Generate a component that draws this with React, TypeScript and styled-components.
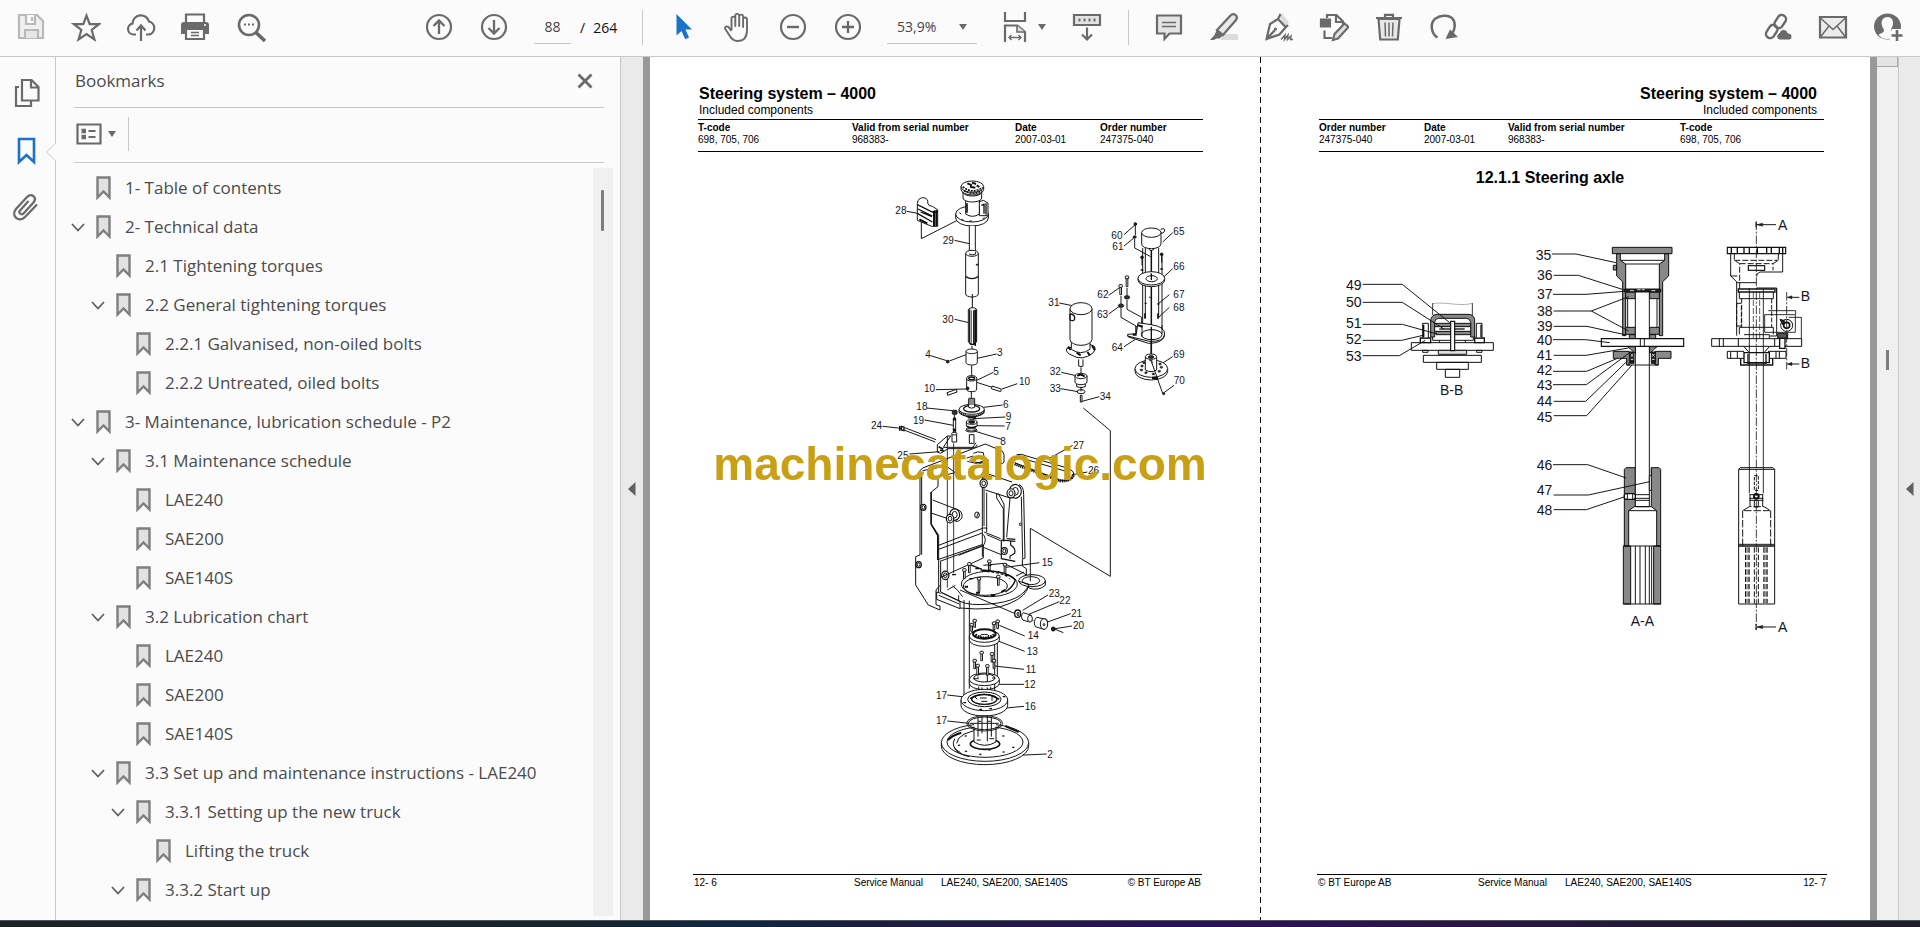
import React from "react";
import styled, { createGlobalStyle } from "styled-components";

const ui = `"Segoe UI", "Open Sans", "Noto Sans", sans-serif`;
const doc = `"Liberation Sans", Arial, sans-serif`;
const ink = "#6a6a6a";
const line = "#c8c8c8";

const GlobalStyle = createGlobalStyle`
  * { box-sizing: border-box; }
  body { margin: 0; background: #fbfbfb; font-family: ${ui}; }
  button, input, select { font: inherit; color: inherit; background: none; border: 0; padding: 0; margin: 0; outline: 0; }
  svg { display: block; }
`;

/* ---------- application frame ---------- */

const Shell = styled.div`
  display: flex;
  flex-direction: column;
  height: 100vh;
  overflow: hidden;
`;

const Toolbar = styled.header`
  display: flex;
  align-items: center;
  height: 57px;
  flex: none;
  padding: 0 5px 2px 3px;
  border-bottom: 1px solid ${line};
  color: #444;
  font-size: 14px;
`;

const Group = styled.div<{ $start?: string }>`
  display: flex;
  align-items: center;
  margin-left: ${(p) => p.$start ?? "0"};
`;

const ToolButton = styled.button<{ $width?: number }>`
  display: flex;
  align-items: center;
  justify-content: center;
  gap: 8px;
  width: ${(p) => p.$width ?? 55}px;
  height: 44px;
`;

const Separator = styled.span<{ $left: number; $right: number }>`
  width: 1px;
  height: 35px;
  background: ${line};
  margin: 0 ${(p) => p.$right}px 0 ${(p) => p.$left}px;
`;

const PageInput = styled.input`
  width: 37px;
  height: 34px;
  margin-left: 13px;
  text-align: center;
  border-bottom: 1px solid ${line};
`;

const PageTotal = styled.span`
  display: flex;
  gap: 8px;
  width: 46px;
  margin-left: 9px;
  color: #111;
`;

const ZoomBox = styled.label`
  display: flex;
  align-items: center;
  position: relative;
  width: 90px;
  height: 34px;
  margin: 0 22px 0 12px;
  border-bottom: 1px solid ${line};
`;

const ZoomSelect = styled.select`
  appearance: none;
  width: 100%;
  height: 100%;
  padding-left: 10px;
`;

const ZoomCaret = styled.span`
  position: absolute;
  right: 10px;
  top: 14px;
  pointer-events: none;
`;

const Main = styled.main`
  display: flex;
  flex: 1;
  min-height: 0;
`;

const Taskbar = styled.div`
  flex: none;
  height: 7px;
  border-top: 1px solid #4a5560;
  background: linear-gradient(90deg, #1b2324 0%, #17242b 30%, #0f2740 38%, #1c1d3c 46%, #2a1257 60%, #2c1255 68%, #2a1640 78%, #221b30 90%, #1d1b26 100%);
`;

/* ---------- navigation ---------- */

const Rail = styled.nav`
  position: relative;
  display: flex;
  flex-direction: column;
  align-items: center;
  gap: 26px;
  width: 56px;
  flex: none;
  padding: 20px 4px 0 0;
  border-right: 1px solid ${line};
`;

const RailButton = styled.button`
  width: 32px;
  height: 32px;
`;

const Notch = styled.span`
  position: absolute;
  right: -1px;
  top: 85px;
`;

const Panel = styled.aside`
  display: flex;
  flex-direction: column;
  width: 565px;
  flex: none;
  border-right: 1px solid ${line};
  color: #4b4b4b;
  font-size: 17px;
`;

const PanelHead = styled.div`
  display: flex;
  align-items: center;
  justify-content: space-between;
  height: 51px;
  flex: none;
  margin: 0 16px 0 18px;
  padding: 0 11px 3px 1px;
  border-bottom: 1px solid ${line};
`;

const PanelTitle = styled.h2`
  margin: 0;
  font-size: 17px;
  font-weight: 400;
`;

const PanelTools = styled.div`
  display: flex;
  align-items: center;
  height: 55px;
  flex: none;
  margin: 0 16px 0 18px;
  padding-bottom: 2px;
  border-bottom: 1px solid ${line};
`;

const OptionsButton = styled.button`
  display: flex;
  align-items: center;
  gap: 6px;
  height: 34px;
  width: 55px;
  padding-left: 2px;
  border-right: 1px solid ${line};
`;

const PanelBody = styled.div`
  display: flex;
  flex: 1;
  min-height: 0;
  padding: 5px 7px 4px 0;
`;

const Tree = styled.ul`
  flex: 1;
  margin: 0;
  padding: 0;
  list-style: none;
  overflow: hidden;
`;

const TreeRow = styled.li<{ $level: number }>`
  display: flex;
  align-items: center;
  height: 39px;
  padding-left: ${(p) => 15 + p.$level * 20}px;
  white-space: nowrap;
`;

const Toggle = styled.button`
  width: 14px;
  height: 20px;
  margin-right: 11px;
`;

const ToggleGap = styled.span`
  width: 25px;
`;

const TreeLink = styled.a`
  display: flex;
  align-items: center;
  gap: 14px;
  color: inherit;
  text-decoration: none;
`;

const PanelScroll = styled.div`
  width: 20px;
  padding: 22px 9px 0 8px;
  background: #f0f0f0;
`;

const PanelThumb = styled.div`
  height: 41px;
  border-radius: 1px;
  background: #7d7d7d;
`;

/* ---------- document ---------- */

const CollapseStrip = styled.button<{ $width: number }>`
  display: flex;
  align-items: center;
  justify-content: center;
  width: ${(p) => p.$width}px;
  flex: none;
  background: #eaeaea;
`;

const Gutter = styled.div`
  width: 7px;
  flex: none;
  background: #999;
`;

const Spread = styled.div`
  display: grid;
  grid-template-columns: 1fr 1fr;
  flex: 1;
  min-width: 0;
  background: #fff;
  color: #000;
  font-family: ${doc};
`;

const Sheet = styled.article<{ $right?: boolean }>`
  display: flex;
  flex-direction: column;
  min-width: 0;
  min-height: 0;
  ${(p) =>
    p.$right &&
    `background: repeating-linear-gradient(180deg, #000 0 6px, transparent 6px 10px) left top / 1px 100% no-repeat;`}
`;

const SheetHead = styled.header<{ $right?: boolean }>`
  flex: none;
  padding-top: 27px;
  margin: ${(p) => (p.$right ? "0 46px 0 59px" : "0 57px 0 48px")};
  border-bottom: 1px solid #000;
`;

const SheetTitles = styled.div<{ $right?: boolean }>`
  padding: ${(p) => (p.$right ? "0 7px 2px 0" : "0 0 2px 1px")};
  text-align: ${(p) => (p.$right ? "right" : "left")};
  border-bottom: 1px solid #000;
`;

const SheetTitle = styled.h1`
  margin: 0;
  font-size: 16px;
  line-height: 20px;
`;

const SheetSub = styled.p`
  margin: 0;
  font-size: 12px;
  line-height: 13px;
`;

const Codes = styled.table`
  width: 100%;
  table-layout: fixed;
  border-collapse: collapse;
  margin: 2px 0 5px;
  font-size: 10px;
  line-height: 12px;
  th, td { padding: 0; text-align: left; white-space: nowrap; }
`;

const SectionTitle = styled.h2`
  flex: none;
  margin: 0;
  padding: 16px 30px 0 0;
  font-size: 16px;
  line-height: 20px;
  text-align: center;
`;

const Figure = styled.svg`
  flex: 1;
  width: 100%;
  min-height: 0;
  font-family: ${doc};
`;

const SheetFoot = styled.footer<{ $right?: boolean }>`
  display: flex;
  flex: none;
  height: 46px;
  margin: ${(p) => (p.$right ? "0 43px 0 57px" : "0 58px 0 43px")};
  padding: 1px 1px 0;
  border-top: 1px solid #000;
  font-size: 10px;
  line-height: 14px;
  white-space: nowrap;
`;

const FootCell = styled.span<{ $width?: number }>`
  ${(p) => (p.$width ? `width: ${p.$width}px;` : "margin-left: auto;")}
`;

const DocScroll = styled.div`
  display: flex;
  flex-direction: column;
  align-items: center;
  width: 22px;
  flex: none;
  background: #f0f0f0;
  border-right: 1px solid ${line};
`;

const DocScrollCap = styled.div`
  align-self: stretch;
  height: 10px;
  background: #e4e4e4;
  border: solid #a8a8a8;
  border-width: 0 1px 1px 0;
`;

const DocThumb = styled.div`
  width: 3px;
  height: 20px;
  margin-top: 283px;
  background: #7d7d7d;
`;

const Watermark = styled.div`
  position: fixed;
  inset: 0;
  display: grid;
  place-items: center;
  pointer-events: none;
  color: #c9a014;
  font: bold 46px/52px ${doc};
`;

/* ---------- icons ---------- */

const Icon = ({ children, size = 30 }: { children: React.ReactNode; size?: number }) => (
  <svg width={size} height={size} viewBox={`0 0 ${size} ${size}`} fill="none" stroke={ink} strokeWidth="2.2" aria-hidden="true">
    {children}
  </svg>
);

const Caret = () => (
  <svg width="8" height="6" viewBox="0 0 8 6" aria-hidden="true"><path d="M0 0h8L4 6z" fill={ink} /></svg>
);

const icons: Record<string, React.ReactNode> = {
  save: (
    <Icon>
      <g stroke="#b9b9b9">
        <path d="M3 3h18l6 6v17H3z" fill="#f0f0f0" />
        <path d="M10 3v9h9V3" fill="#fbfbfb" /><path d="M16 5v4" />
        <path d="M9 26v-8h13v8" fill="#e6e6e6" />
      </g>
    </Icon>
  ),
  star: <Icon><path d="M15.500 3.600l3.200 8.600h9.300l-7.300 5.800 2.700 9.400-7.900-5.400-7.900 5.400 2.700-9.400L3 12.200h9.300z" /></Icon>,
  cloud: (
    <Icon>
      <path d="M10 22.500H7.500a5.500 5.500 0 0 1-1-10.900 7 7 0 0 1 .6-1.600M6.500 11.600A8.400 8.400 0 0 1 23 9.500a6.600 6.600 0 0 1-.5 13H20" />
      <path d="M15 29V14M10.500 18.500L15 13.500l4.500 5" strokeWidth="2.200" />
    </Icon>
  ),
  print: (
    <Icon>
      <path d="M5 10V2.500h18V10" fill="#fbfbfb" />
      <path d="M0 13q0-3 3-3h22q3 0 3 3v9h-5v-6H5v6H0z" fill={ink} stroke="none" />
      <path d="M5 17h18v10H5z" fill="#fbfbfb" /><path d="M10 20.500h8M10 23.500h8" strokeWidth="1.400" />
      <circle cx="24" cy="13" r="1" fill="#fbfbfb" stroke="none" />
    </Icon>
  ),
  search: (
    <Icon>
      <circle cx="13" cy="13" r="10" strokeWidth="2.600" /><path d="M20 20.500L29 29" strokeWidth="3.600" />
      <path d="M8 12.500h2M12 12.500h2M16 12.500h2" strokeWidth="2.200" />
    </Icon>
  ),
  up: <Icon><circle cx="15" cy="15" r="12" /><path d="M15 22V9M9.500 14L15 8.500l5.500 5.500" strokeWidth="2.300" /></Icon>,
  down: <Icon><circle cx="15" cy="15" r="12" /><path d="M15 8v13M9.500 16l5.500 5.500 5.500-5.500" strokeWidth="2.300" /></Icon>,
  cursor: <Icon><path d="M8.500 2L24 17.500h-6.500l3.500 8-3.800 1.700-3.700-8.200-5 4.500z" fill="#1a73c8" stroke="none" /></Icon>,
  hand: (
    <Icon>
      <path
        d="M8.500 18V6.500a1.900 1.900 0 0 1 3.800 0V14V3.800a1.900 1.900 0 0 1 3.900 0V14V4.600a1.900 1.900 0 0 1 3.900 0V15V7.500a1.900 1.900 0 0 1 3.900 0V18c0 7-3.500 11-9.500 11-4 0-6-2-8-5.500L2.300 17c-1-2.200 1.600-3.500 3.200-1.800l3 3.600"
        strokeWidth="1.900" strokeLinejoin="round"
      />
    </Icon>
  ),
  minus: <Icon><circle cx="15" cy="15" r="12" /><path d="M9 15h12" strokeWidth="2.400" /></Icon>,
  plus: <Icon><circle cx="15" cy="15" r="12" /><path d="M9 15h12M15 9v12" strokeWidth="2.400" /></Icon>,
  fit: (
    <Icon>
      <path d="M5 0v9h20V0" /><path d="M5 30V13.500h12.500L25 20v10" /><path d="M17 13.500V20h8" fill="#ddd" strokeWidth="1.600" />
      <path d="M9 25.500h12M11.500 23L9 25.500l2.500 2.500M18.500 23l2.500 2.500-2.500 2.500" strokeWidth="1.400" />
    </Icon>
  ),
  keyboard: (
    <Icon>
      <path d="M2 3h26v10H2z" fill="#e4e4e4" /><path d="M6.500 8h2M11.500 8h2M16.500 8h2M21.500 8h2" strokeWidth="2.800" />
      <path d="M15 15.500V28M10 22.500l5 5 5-5" />
    </Icon>
  ),
  comment: (
    <Icon><path d="M3 3.500h24v18H15.500L10.500 27v-5.500H3z" fill="#e4e4e4" /><path d="M8 10.500h14M8 14.500h14" strokeWidth="1.600" /></Icon>
  ),
  marker: (
    <Icon>
      <path d="M14 22h15v6H11z" fill="#dcdcdc" stroke="none" />
      <path d="M8 18L21.500 3.500Q24 1 26.500 3t.5 5L14 23z" fill="#e8e8e8" />
      <path d="M8 17.500l6.500 5.500-4 3.500H7.800L4.500 28H1l4.500-5z" fill={ink} stroke="none" />
    </Icon>
  ),
  pen: (
    <Icon>
      <path d="M15 4l3-3 7 10-4 3z" fill="#dcdcdc" stroke="none" />
      <path d="M16.500 2L14 7 6 12 2.500 27l13-4.500 6-7L24 13M14 7l8 8.500M3 26.500l8-8.500" />
      <circle cx="11.500" cy="17" r="1.600" fill={ink} stroke="none" />
      <path d="M17 27.500l4-4.500-.5 4.500L24 23l-.5 4.500 3.500-3.500-.5 3.500H29" strokeWidth="1.500" />
    </Icon>
  ),
  stamp: (
    <Icon>
      <path d="M8 6V3h9.500L24 9.500V14M17 3v7h7" />
      <path d="M2 7.500h9v7H2z" fill={ink} /><path d="M5.500 18.500V26H13" />
      <path d="M14 28l1.500-6L25.500 11.500l4 3.500-10.500 11.500z" fill="#e0e0e0" />
    </Icon>
  ),
  trash: (
    <Icon>
      <path d="M2 6h26M11 5.500V2.800h8v2.700" /><path d="M4.500 7l1.700 20.500h17.600L25.500 7z" fill="#e8e8e8" />
      <path d="M11 10.500l.5 14M15 10.500v14M19 10.500l-.5 14" strokeWidth="1.500" />
    </Icon>
  ),
  rotate: (
    <Icon>
      <path d="M8.500 25.500C1.500 21 1 10.500 6.500 6.500S22 2.500 25 9q2 6-1.500 12" strokeWidth="2.500" />
      <path d="M16.500 27l4.500-9.500 8 7.500z" fill={ink} stroke="none" />
    </Icon>
  ),
  link: (
    <Icon>
      <rect x="13" y="2.500" width="8.500" height="14" rx="4.200" transform="rotate(33 17.200 9.500)" strokeWidth="2.400" />
      <rect x="4.500" y="12.500" width="8.500" height="14" rx="4.200" transform="rotate(33 8.700 19.500)" strokeWidth="2.400" />
      <path d="M16 28a3.800 3.800 0 0 1 .2-7 4.500 4.500 0 0 1 8.800 0 3.700 3.700 0 0 1 2 7z" fill={ink} stroke="#fbfbfb" strokeWidth="1" />
    </Icon>
  ),
  mail: <Icon><path d="M2 5h26v20.500H2z" fill="#ececec" /><path d="M2.500 6L15 17.500 27.500 6M2.500 25L11 14M27.500 25L19 14" strokeWidth="1.500" /></Icon>,
  user: (
    <Icon>
      <ellipse cx="14.500" cy="14.500" rx="13.500" ry="13" fill={ink} stroke="none" />
      <path d="M14.500 5c4 0 6 3 5.500 7-.4 3-2 4.500-2 6s1 2 2.500 2.500l4 2L20 26q-6 2-11 0l-3.500-3c1-1.500 5.500-2 5.500-4.500 0-2-2-3-2.300-6.500C8.300 8 10.500 5 14.500 5z" fill="#fbfbfb" stroke="none" />
      <path d="M19 17h11v13H17v-8z" fill="#fbfbfb" stroke="none" />
      <path d="M24 18v11M18.500 23.500h11" strokeWidth="2.600" />
    </Icon>
  ),
};

const Tool = ({ name, label }: { name: string; label: string }) => (
  <ToolButton type="button" aria-label={label}>{icons[name]}</ToolButton>
);

const BookmarkIcon = () => (
  <svg width="15" height="24" viewBox="0 0 15 24" aria-hidden="true">
    <path d="M1.500 1.500h12V21.500l-6-6-6 6z" fill="#e2e2e2" stroke="#7f7f7f" strokeWidth="2.400" />
  </svg>
);

const Chevron = () => (
  <svg width="14" height="20" viewBox="0 0 14 20" fill="none" stroke="#606060" strokeWidth="1.800" aria-hidden="true">
    <path d="M1 7l6 6.500L13 7" />
  </svg>
);

const SideArrow = () => (
  <svg width="8" height="14" viewBox="0 0 8 14" aria-hidden="true"><path d="M7.500 0v14L0 7z" fill="#606060" /></svg>
);

/* ---------- left page: exploded view ---------- */

type Mark = [string, number, number];

const Marks = ({ items, size, drop }: { items: Mark[]; size: number; drop: number }) => (
  <g fontSize={size} fill="#14141c" stroke="none">
    {items.map(([t, x, y], i) => <text key={i} x={x} y={y + drop}>{t}</text>)}
  </g>
);

const Screw = ({ x, y, h = 24 }: { x: number; y: number; h?: number }) => (
  <g fill="#fff">
    <path d={`M${x - 2.5} ${y + 6}v${h}h5v${-h}`} />
    <rect x={x - 5} y={y} width="10" height="8" rx="2" strokeWidth="3" />
  </g>
);

const Drum = ({ x, y, rx, ry, h }: { x: number; y: number; rx: number; ry: number; h: number }) => (
  <g fill="#fff">
    <path d={`M${x - rx} ${y}v${h}a${rx} ${ry} 0 0 0 ${2 * rx} 0v${-h}`} />
    <ellipse cx={x} cy={y} rx={rx} ry={ry} />
  </g>
);

const Hub = ({ x, y, r }: { x: number; y: number; r: number }) => (
  <g fill="#fff">
    <ellipse cx={x} cy={y} rx={r} ry={r * 1.15} strokeWidth="3.500" />
    <ellipse cx={x} cy={y} rx={r * 0.5} ry={r * 0.65} strokeWidth="3" />
  </g>
);

const upperMarks: Mark[] = [
  ["28", 106, 122], ["29", 248, 212], ["30", 247, 449], ["4", 196, 553], ["3", 411, 548], ["5", 400, 603],
  ["10", 192, 656], ["10", 477, 635], ["18", 169, 708], ["6", 429, 704], ["9", 437, 740], ["19", 159, 750],
  ["7", 436, 770], ["24", 33, 767], ["60", 754, 196], ["61", 757, 230], ["65", 940, 184], ["66", 940, 289],
  ["67", 940, 374], ["68", 940, 412], ["62", 712, 373], ["63", 711, 434], ["64", 755, 533], ["69", 940, 553],
  ["70", 941, 632], ["31", 565, 398], ["32", 569, 605], ["33", 569, 654], ["34", 719, 680],
];

const lowerMarks: Mark[] = [
  ["8", 421, 35], ["25", 112, 75], ["27", 639, 47], ["26", 684, 122], ["15", 545, 398], ["23", 566, 489],
  ["22", 598, 512], ["21", 633, 549], ["20", 639, 587], ["14", 503, 617], ["13", 500, 663], ["11", 497, 719],
  ["12", 493, 762], ["17", 228, 797], ["16", 494, 828], ["17", 228, 872], ["2", 562, 972],
];

const ExplodedView = () => (
  <Figure viewBox="-630 -54 1830 2166" preserveAspectRatio="xMidYMin meet" role="img" aria-label="Steering system, exploded view">
    <g fill="none" stroke="#101010" strokeWidth="2.900">
      {/* leader lines */}
      <path d="M140 124l50 9M184 155v51l106-54M284 211l52 12M284 448l52 12M212 557l48 15M410 552l-72 16M400 607l-62 30M228 659l92-2M350 637l44 14M472 641l-46 16M200 714l78 8M428 705l-90 11M436 741l-98 5M194 750l86 16M434 768l-84-1M68 769l56 6M340 782l84 26" />
      <path d="M792 194l34-30M792 228l32-26M938 188l-30 28M938 296l-30 28M928 374l-34 28M928 412l-34 32M746 376l34-24M746 432l36-26M792 530l34-22M938 560l-34 22M598 399l54 11M604 607l44 10M602 656l52 9M718 680l-52 14" />
      <path d="M670 714l81 68v437L511 1075v142" />

      {/* 28 armrest pad */}
      <path d="M172 100q2-18 20-17 14 4 11 16 2 10 14 10l16 10v50h-18l-43-18z" fill="#fff" />
      <path d="M172 104l45 22h16M172 130l45 26M174 117l43 21M182 126l34 14" strokeWidth="4" />
      <path d="M225 120v48M230 120v48M221 122v46" strokeWidth="4" /><path d="M178 148l24 12" strokeWidth="6" />

      {/* upper steering head */}
      <Drum x={336} y={132} rx={49} ry={24} h={12} />
      <path d="M356 96l14-5 14 8v38h-26z" fill="#fff" /><path d="M364 106l8-3v28M378 100v34" strokeWidth="4" />
      <path d="M317 78v54q20 14 41 0V78" fill="#fff" strokeWidth="3" />
      <path d="M321 100v28" strokeWidth="5" />
      <Drum x={337} y={66} rx={28} ry={12} h={18} />
      <Drum x={337} y={50} rx={34} ry={17} h={8} />
      <path d="M308 50q30 24 60 2M312 62q26 16 54 0" strokeWidth="5" strokeDasharray="6 3" />
      <path d="M322 40l14 6M336 38l12 4M330 50l16 3M350 46l8 5" strokeWidth="6" />
      <path d="M298 128l6 4M304 148l6 2M368 146l6-3M328 153h8" strokeWidth="3" />

      {/* column tube */}
      <path d="M328 168v80h18v-80" fill="#fff" />
      <Drum x={336} y={250} rx={19} ry={9} h={122} />
      <path d="M317 320q19 12 38 0" strokeWidth="4" /><path d="M327 252q10 5 20 0v-6" /><circle cx="351" cy="284" r="2" fill="#222" />
      <path d="M337 372v44" strokeWidth="3" />
      {/* 30 spline shaft */}
      <path d="M325 418q12-10 25 0v98q-12 14-25 0z" fill="#fff" />
      <path d="M329 418v100M341 421v102M345 420v100M348 418v98" strokeWidth="3.500" /><path d="M334 421v102" stroke="#777" strokeWidth="4" />
      <path d="M328 520q10 8 18 0v8" strokeWidth="4" /><path d="M336 528v12" />
      <Drum x={335} y={544} rx={17} ry={7} h={34} /><path d="M335 586v34" />
      <Drum x={335} y={625} rx={15} ry={8} h={32} /><circle cx="323" cy="655" r="4" fill="#222" /><ellipse cx="335" cy="625" rx="9" ry="4" strokeWidth="4" />
      <path d="M334 664v22" />
      <circle cx="263" cy="575" r="4" fill="#222" /><path d="M268 573l50-19" />
      <path d="M261 668l28-10 2 8-28 10zM396 648l28 9-2 8-28-9z" fill="#fff" strokeWidth="3" />
      {/* 6 gear */}
      <Drum x={335} y={718} rx={38} ry={15} h={7} />
      <path d="M298 725q37 30 74 0" strokeWidth="6" strokeDasharray="4 2" />
      <ellipse cx="335" cy="716" rx="24" ry="10" strokeWidth="4" />
      <path d="M326 686v26q9 5 18 0v-26" fill="#fff" /><path d="M326 690h18M326 696h18M326 702h18M326 685h18" />
      <path d="M324 738h22v6h-22z" fill="#333" />
      <Drum x={335} y={756} rx={16} ry={7} h={10} /><ellipse cx="335" cy="756" rx="9" ry="4" fill="#222" /><path d="M320 768q15 9 30 0" strokeWidth="4" />
      <ellipse cx="334" cy="781" rx="17" ry="5" />
      {/* 18, 19 */}
      <rect x="277" y="721" width="14" height="12" rx="3" fill="#333" /><path d="M283 734v10" />
      <path d="M280 744h7v42h-7z" fill="#fff" /><path d="M279 748h9M279 780h9" strokeWidth="7" />
      {/* 24 long bolt */}
      <path d="M119 768v14M124 769l8 2v11l-8-2z" strokeWidth="4" /><path d="M134 773l94 36M132 780l94 36" />

      {/* 31 drive motor */}
      <path d="M630 532l-10 4q-4 12 16 20 30 18 62-6 12-12 6-20l-12-6z" fill="#fff" strokeWidth="3" />
      <path d="M634 508v30q28 20 56 0v-30" fill="#fff" />
      <Drum x={663} y={416} rx={33} ry={18} h={92} />
      <path d="M630 432v18q14 6 14-6t-14-12" strokeWidth="4" />
      <path d="M624 530l8 10M650 548l12 8M682 546l8 10M696 526l8 14" strokeWidth="6" />
      <path d="M656 568v20q7 4 13 0v-20" fill="#fff" /><path d="M663 592v20" />
      <Drum x={663} y={618} rx={18} ry={8} h={18} /><path d="M650 642v8q13 6 26 0v-8" /><path d="M652 618q12-8 22 2" strokeWidth="6" />
      <ellipse cx="663" cy="665" rx="12" ry="6" /><path d="M663 650v14M661 676v20h5v-20z" strokeWidth="3" />

      {/* 60-70 brake stack */}
      <path d="M826 160v36M824 206v28l48 26" /><circle cx="826" cy="162" r="4" fill="#222" /><ellipse cx="824" cy="201" rx="5" ry="3" fill="#222" />
      <path d="M848 234v260M856 234v210M896 234v210M906 252v240" />
      <path d="M902 178q14-6 12 6-4 8-14 4v26" strokeWidth="3" />
      <Drum x={874} y={188} rx={29} ry={14} h={34} />
      <path d="M874 240v78M874 350v210" strokeWidth="4.500" /><path d="M866 238q8 8 16 0" />
      <path d="M846 258v28M905 250v28" strokeWidth="3" /><circle cx="846" cy="262" r="4" fill="#222" /><circle cx="905" cy="253" r="4" fill="#222" />
      <path d="M842 300h8M901 297h8" strokeWidth="5" />
      <Drum x={874} y={325} rx={40} ry={20} h={5} />
      <ellipse cx="875" cy="326" rx="17" ry="9" strokeWidth="3" fill="#fff" /><path d="M874 310v20" strokeWidth="4" />
      <Screw x={801} y={318} h={26} /><Screw x={782} y={344} h={24} />
      <ellipse cx="801" cy="382" rx="8" ry="5" fill="#333" /><ellipse cx="783" cy="407" rx="8" ry="5" fill="#333" />
      <path d="M801 354v22M801 390v28l44 24v24M783 378v24M783 414v28l45 26v24" />
      <path d="M854 400h6M892 402h6M870 380v4" strokeWidth="4" /><path d="M855 430v16M894 430v16" strokeWidth="5" />
      <path d="M834 458l40 6q40 6 40 28-2 24-46 22l-65-16v-5l26-2z" fill="#fff" strokeWidth="3" />
      <path d="M803 500l62 20q44 0 49-24" strokeWidth="3" />
      <ellipse cx="875" cy="494" rx="31" ry="15" strokeWidth="3" /><path d="M834 466l14 4M818 494h12" strokeWidth="6" />
      <path d="M828 468v24M846 466v34M906 466v26" /><path d="M874 470v86" strokeWidth="4" />
      <Drum x={874} y={596} rx={49} ry={26} h={8} />
      <g fill="#333" strokeWidth="1.500">
        {[[846, 588], [844, 600], [858, 608], [880, 612], [898, 604], [904, 592], [900, 582], [852, 578]].map(([x, y]) => (
          <ellipse key={`${x}-${y}`} cx={x} cy={y} rx="4" ry="3" />
        ))}
      </g>
      <path d="M856 600V562h34v38q-17 10-34 0z" fill="#fff" /><ellipse cx="873" cy="560" rx="17" ry="8" fill="#fff" />
      <ellipse cx="873" cy="561" rx="8" ry="4" fill="#333" /><path d="M868 572h8v8M874 574l34 96M912 668l30-22" /><path d="M876 624h18" strokeWidth="7" /><circle cx="911" cy="671" r="3" fill="#333" />

      <g transform="translate(0 780)">
        <path d="M148 72l90-7M638 46l-68 38M682 126l-46 8M538 398l-100 14M564 495l-76 46M598 515l-92 38M632 551l-72 26M636 588l-50 8M494 618l-76-32M494 664l-82-32M492 718l-88-10M492 763h-76M262 795l62 7M492 829l-54 5M262 873l66 7M560 972l-86 4" />

        {/* 25 bracket */}
        <path d="M232 44l30-26h10l-22 34h96l6-8M232 44v22l10 4 22-14h72l12-18M262 18v30" strokeWidth="3" />
        <path d="M276 12h14v24h-14zM328 14h14v26h-14z" fill="#fff" strokeWidth="3" /><ellipse cx="283" cy="11" rx="8" ry="4" fill="#fff" /><ellipse cx="334" cy="-2" rx="16" ry="5" />
        <path d="M236 50l14 8M240 60l12 4M282 -4v6" strokeWidth="5" />
        <path d="M262 48v425M281 40v390" strokeWidth="2.500" />

        {/* frame back and top plate */}
        <path d="M180 122l8-8 188-72 52 22 4 10v22q-2 6-10 4" strokeWidth="3" />
        <path d="M188 122l70-14 28 20-52 12M340 70q14-8 30-2l4 24-26 8-26-6M320 84l20-6" />
        <path d="M346 96q18 8 40-6" strokeWidth="4" />
        <path d="M180 122v253l-13 5v85l38 60 35 15v-12l-12-4V480l12-14" strokeWidth="3" />
        <path d="M185 128v92q-6 12 0 24v130M234 140v30l-20 16v96l22 34v170" strokeWidth="3" />
        <path d="M213 186v96l20 34v74" strokeWidth="4" />
        <path d="M367 140v240M372 138v150M380 188v108" />
        <path d="M378 130l78 26M376 180l74 24M410 190v14l20 32v98M414 190l18 32v112" strokeWidth="3" />
        <path d="M477 164q14 4 14 30l4 190-8 4v20l12 8v38" strokeWidth="3" />
        <path d="M450 204l-10 118M484 200l4 186" />
        <Hub x={371} y={160} r={11} /><Hub x={466} y={184} r={18} /><Hub x={453} y={190} r={12} />
        <path d="M218 210l72 28M216 250l48 16" /><path d="M290 238q18 4 16 24-6 14-20 12" strokeWidth="3" />
        <Hub x={284} y={254} r={15} /><Hub x={270} y={266} r={11} />
        <Hub x={190} y={232} r={8} /><Hub x={176} y={404} r={8} /><Hub x={256} y={436} r={11} />
        <ellipse cx="351" cy="255" rx="7" ry="9" strokeWidth="3" /><path d="M355 248l-5 14" /><ellipse cx="481" cy="283" rx="3" ry="4" />

        {/* cross tubes */}
        <path d="M236 346l134-52h10v12M236 358l128-48M236 388l130-44M364 308q22 18 4 42" strokeWidth="3" />
        <path d="M296 376l72-28M240 394l130-48v38M370 384l-128 58" />
        <path d="M372 306l50 20M380 314l42 18M370 352l54 22" />
        <path d="M424 330l42 4M424 330v56l42 8M440 326l26 2M452 334v12q16 8 12 24l-14 8v8" strokeWidth="3.500" /><Hub x={433} y={363} r={9} />

        {/* base plate */}
        <path d="M242 394v92l58 28v22l-70-28v-22l12 4M300 514q30 14 88 8 100-8 118-58l2-22-16-12-60-30-62 6M300 534q100 10 150-14 52-22 56-56" strokeWidth="3" />
        <path d="M244 488l56 26M236 496l62 26M296 496v18M308 500l-16-20-14-12M262 480l24-14" />
        <ellipse cx="388" cy="462" rx="84" ry="38" /><ellipse cx="376" cy="468" rx="66" ry="28" strokeWidth="3" />
        <path d="M362 420q80 4 104 30-6 20-30 36M330 404l36 14" strokeWidth="4" />
        <path d="M366 424q70 4 84 24" strokeDasharray="8 6" />
        <path d="M348 488h12M392 496h14M424 486l12-6M314 470h10" strokeWidth="6" />
        <ellipse cx="516" cy="452" rx="40" ry="18" fill="#fff" strokeWidth="3" /><ellipse cx="513" cy="452" rx="26" ry="12" />
        <path d="M476 454l30 8v12q30 10 50-8v-14" strokeWidth="3" /><path d="M468 438l24-12" /><path d="M511 434v20" />
        <path d="M300 480l168 72M506 564l14 8M586 598l24 10" />
        <Screw x={328} y={398} /><Screw x={388} y={390} /><Screw x={435} y={400} /><Screw x={313} y={416} />
        <Screw x={357} y={442} h={36} /><Screw x={415} y={436} />
        <path d="M276 434h12M346 416h12M386 406h8M328 446h12M434 436h10" strokeWidth="4" />

        {/* 27, 26 chain */}
        <path d="M470 74q14-4 30 4l128 38q16 8 14 22-10 18-46 12l-132-52" strokeWidth="3" />
        <path d="M484 84l134 40q8 6 4 18" strokeWidth="3" />
        <path d="M464 102l136 50q30 4 40-16" strokeWidth="9" strokeDasharray="4 2" />

        {/* 20-23 */}
        <ellipse cx="473" cy="551" rx="9" ry="11" fill="#fff" strokeWidth="4" /><ellipse cx="474" cy="552" rx="3" ry="5" />
        <path d="M490 548q-10 10-2 22l20 6q12-8 6-20z" fill="#fff" /><ellipse cx="510" cy="566" rx="7" ry="10" fill="#fff" />
        <path d="M530 562q-12 12-4 28l26 8q16-8 8-30z" fill="#fff" /><ellipse cx="552" cy="582" rx="11" ry="16" fill="#fff" /><circle cx="552" cy="584" r="3" />
        <circle cx="580" cy="597" r="6" fill="#222" />

        {/* lower bearing stack */}
        <path d="M312 510v292M328 512v264M404 634v112M412 634v120" />
        <Screw x={344} y={568} h={18} /><Screw x={335} y={580} h={18} /><Screw x={402} y={576} h={18} /><Screw x={413} y={570} h={20} />
        <Drum x={373} y={618} rx={45} ry={19} h={12} /><ellipse cx="373" cy="612" rx="34" ry="14" fill="#fff" strokeWidth="6" />
        <path d="M346 614q27 20 56 0" strokeWidth="8" strokeDasharray="5 3" /><ellipse cx="373" cy="618" rx="14" ry="5" />
        <Screw x={365} y={664} h={22} /><Screw x={396} y={668} h={22} /><Screw x={344} y={688} h={22} /><Screw x={402} y={688} h={22} />
        <Drum x={373} y={748} rx={45} ry={19} h={12} /><ellipse cx="373" cy="744" rx="32" ry="12" fill="#fff" strokeWidth="3" />
        <Screw x={353} y={703} h={26} /><Screw x={382} y={704} h={26} />
        <path d="M354 740v8M382 736v20M340 746h12M396 744h10" strokeWidth="3" />
        <path d="M356 770v30M366 772v26M382 772v36M392 770v28M404 762v30" />
        <Drum x={373} y={810} rx={70} ry={32} h={16} /><ellipse cx="373" cy="808" rx="50" ry="22" strokeWidth="3" /><ellipse cx="373" cy="808" rx="38" ry="15" strokeWidth="4" />
        <path d="M330 806q43-26 88 2" strokeWidth="4" /><path d="M360 804h20M364 814h18M344 800l8 8M396 800v12" strokeWidth="3" />
        <path d="M310 818h8M358 838h8M388 836h8M428 800h8" strokeWidth="4" />

        {/* 2 drive wheel */}
        <Drum x={375} y={938} rx={131} ry={56} h={10} />
        <ellipse cx="375" cy="936" rx="114" ry="46" /><path d="M290 940q4-34 80-42M282 950q6 22 46 30M284 926q-14 26 18 42" strokeWidth="3" />
        <path d="M264 930q12-14 40-22M436 888l40 18" strokeWidth="6" />
        <g fill="#222" stroke="none">
          {[[317, 918], [430, 918], [297, 946], [460, 952], [318, 964], [431, 966], [361, 973], [388, 960]].map(([x, y]) => (
            <ellipse key={`${x}-${y}`} cx={x} cy={y} rx="4" ry="2.500" />
          ))}
        </g>
        <ellipse cx="375" cy="942" rx="44" ry="16" strokeWidth="5" fill="#fff" />
        <path d="M342 936v-64h66v64q-32 20-66 0z" fill="#fff" stroke="none" />
        <path d="M342 890v46q32 20 66 0v-46M354 860v60M366 860v50M382 858v76M394 860v60M350 930h12M388 926h14" strokeWidth="3" />
        <ellipse cx="374" cy="880" rx="54" ry="23" strokeWidth="2.600" /><ellipse cx="374" cy="880" rx="49" ry="19" />
        <path d="M354 874h10M382 874h10M330 880h86" />
      </g>
    </g>
    <Marks items={upperMarks} size={30} drop={11} />
    <g transform="translate(0 780)"><Marks items={lowerMarks} size={30} drop={11} /></g>
  </Figure>
);

/* ---------- right page: sections ---------- */

const axleMarks: Mark[] = [
  ["35", 47, 165], ["36", 51, 226], ["37", 51, 283], ["38", 51, 333], ["39", 51, 379], ["40", 50, 420],
  ["41", 50, 465], ["42", 50, 511], ["43", 50, 555], ["44", 50, 604], ["45", 50, 651], ["46", 50, 795],
  ["47", 50, 871], ["48", 50, 931], ["49", -522, 256], ["50", -522, 306], ["51", -522, 370], ["52", -522, 417],
  ["53", -522, 468], ["B-B", -240, 570], ["A-A", 332, 1264], ["A", 774, 76], ["A", 774, 1281], ["B", 842, 289], ["B", 842, 489],
];

const AxleSections = () => (
  <Figure viewBox="-780 -36 1830 2058" preserveAspectRatio="xMidYMin meet" role="img" aria-label="Steering axle, sections A-A and B-B">
    <defs>
      <pattern id="hatch" width="6" height="6" patternUnits="userSpaceOnUse">
        <rect width="6" height="6" fill="#c4c4c4" /><path d="M0 0l6 6M6 0L0 6" stroke="#444" strokeWidth="1.400" />
      </pattern>
    </defs>
    <g fill="none" stroke="#101010" strokeWidth="2.900">
      {/* section A-A */}
      <g fill="url(#hatch)" strokeWidth="3">
        <path d="M277 142h179v19H277zM290 161h11v20l16 11v215h-9V245l-18-17zM446 161h-12v20l-16 11v215h10V245l18-17zM280 196h10v14h-10z" />
        <path d="M317 276h29v20h-29zM389 276h29v20h-29zM317 382h29v21h-29zM389 382h29v21h-29zM328 404h18v12h-18zM389 404h18v12h-18z" />
        <path d="M280 454h48v41h-8v-20h-40zM453 454h-48v41h10v-20h38z" />
        <path d="M318 803h28v115l-20 14v106h-13V808zM394 803h23l5 5v230h-12V932l-16-12zM310 1038h22v174h-22zM401 1038h21v174h-21z" />
      </g>
      <path d="M301 181h133M317 192h101M323 296v86M411 296v86" />
      <path d="M314 267h108v9H314z" fill="#222" /><path d="M330 272h12M352 269h10M366 269h8M394 272h12" stroke="#ddd" />
      <path d="M346 276v644h42V276z" fill="#fff" />
      <path d="M244 416h247v23H244z" fill="#fff" strokeWidth="3.500" /><path d="M361 416v23M373 416v23M346 495h42" />
      <path d="M323 440l23 20v-20zM411 440l-22 20v-20z" fill="url(#hatch)" />
      <path d="M330 456h12v34h-12zM394 456h12v34h-12z" fill="#222" /><path d="M332 462l8 8M340 462l-8 8M396 462l8 8M404 462l-8 8M332 478h8M396 478h8" stroke="#ddd" />
      <path d="M320 495h26M389 495h26" /><path d="M388 827h6v44h-6zM394 803v24" fill="#fff" />
      <path d="M316 881h26l4 3v10l-4 4h-26l-3-4v-10z" fill="#fff" strokeWidth="4" /><path d="M322 881v17M338 881v17M346 884h42M346 895h42M346 901h42" />
      <path d="M346 920h48M326 932h84M310 1038h112M310 1212h112" /><path d="M346 1038v174M360 1038v174M376 1038v174M388 1038v174M395 1038v174" />

      {/* leaders */}
      <path d="M96 162h72l120 26M101 226h74l138 44M99 283h99l116-9M101 333h113l112-43M214 333l112 60M101 379h100l118 26M99 419h98l72 9M101 466h98l126-22M99 514h101l90-38M99 554h100l134-99M101 604h96l126-122M101 647h99l136-152M99 794h104l116 40M101 885h104l184-40M101 929h98l116-39" />

      {/* side elevation */}
      <path d="M622 142h175v19H622z" strokeWidth="3.500" /><path d="M634 142v19M652 142v19M672 142v19M688 142v19M712 142v19M740 142v19M754 142v19M778 142v19M788 142v19" strokeWidth="4" />
      <path d="M632 161v67l18 17v162M632 228h20M788 161v55h-68q-12 4-10 14M650 248h60M710 264h60v144h-20" />
      <path d="M643 161v20l16 10v75M775 161v20l-16 10v20M643 181h132M659 191h100" strokeDasharray="18 6" />
      <rect x="685" y="197" width="49" height="14" strokeWidth="3.500" />
      <path d="M655 267h110v9H655z" strokeWidth="4" /><path d="M658 276v20h102v-20M658 403v-21h102v21M672 404h76v12" />
      <path d="M665 296v86M755 296v86M650 310v72M664 318v60M650 310h14M650 378h14" strokeDasharray="14 5" />
      <path d="M575 416h270v23H575zM598 416v23M610 416v23M655 416v23M764 416v23" strokeWidth="3" />
      <path d="M622 454h50M744 454h54v21h-50M622 454v21h50M632 454v21M652 454v21M768 454v21M778 454v21M672 440l14 16M748 440l-14 16" strokeWidth="3" />
      <path d="M672 458h76v30h-76zM662 475v20h96v-20M684 462v30M738 462v30M664 495h88M684 489h54" strokeWidth="4" />
      <path d="M688 264v616M730 264v616" strokeWidth="2.600" />
      <path d="M700 276v140M719 276v140" strokeDasharray="18 6" strokeWidth="2" />
      <path d="M734 344h92v53h-92zM745 332h82v12M806 352h38v64M770 264v70" strokeWidth="2.600" />
      <circle cx="800" cy="376" r="18" strokeWidth="3" /><circle cx="800" cy="376" r="9" strokeWidth="5" /><path d="M780 358l14 4-6 12z" fill="#222" />
      <path d="M773 400h30v15h-30z" fill="#555" /><path d="M779 415h16v30h-16z" fill="#fff" strokeWidth="4" />
      <path d="M656 808l5-5h98l5 5v230H656zM656 808h108M656 1038h108v174H656z" strokeWidth="3" />
      <path d="M703 827h12v44h-12z" strokeDasharray="10 4" strokeWidth="3" /><circle cx="709" cy="889" r="7" strokeWidth="6" />
      <path d="M688 884h42M688 895h42M688 901h42M690 884v36M728 884v36" /><path d="M703 901h12v20h-12z" />
      <path d="M688 920l-20 12h84l-20-12zM668 932v106M752 932v106" strokeDasharray="22 6" />
      <path d="M677 1042v168M687 1042v168M732 1042v168M741 1042v168" strokeWidth="4" strokeDasharray="16 6" /><path d="M682 1042v168M736 1042v168" stroke="#999" strokeWidth="5" strokeDasharray="16 6" />
      <path d="M703 1042v168M715 1042v168" strokeWidth="3" strokeDasharray="16 6" />
      <path d="M656 1033h108" />
      <path d="M709 64v1226" strokeWidth="2.400" strokeDasharray="26 5 6 5" /><path d="M800 276v232" strokeWidth="2.400" strokeDasharray="26 5 6 5" />
      <path d="M710 74h58M710 1281h58M802 292h36M802 492h36" /><path d="M710 74l18-5v10zM710 1281l18-5v10zM802 292l14-5v10zM802 492l14-5v10z" fill="#222" strokeWidth="1" />
      <path d="M708 66v16M708 1272v18" strokeWidth="3" />

      {/* section B-B */}
      <g transform="translate(-660 0)">
        <path d="M398 345v-36M517 345v-36" strokeWidth="2.500" /><path d="M398 311q20-4 60 1 40 4 59-2" stroke="#888" strokeWidth="2" />
        <path d="M392 411v-52q4-16 20-16h92q18 0 20 16v52h-12v-44q-2-12-12-12h-84q-12 0-12 12v44z" fill="url(#hatch)" strokeWidth="3" />
        <path d="M404 370h108v10H404zM408 394h104v10H408z" fill="url(#hatch)" /><path d="M404 380h108v14H404z" fill="#fff" /><path d="M418 387h76" strokeWidth="4" />
        <path d="M334 428h246v23H334z" fill="#fff" strokeWidth="3" />
        <path d="M361 414h31v14h-31zM524 414h29v14h-29z" fill="#fff" strokeWidth="4" />
        <path d="M368 370h17v44h-17zM529 370h17v44h-17z" fill="#fff" strokeWidth="3" /><path d="M371 374v38M543 374v38" strokeWidth="4" />
        <path d="M398 411v10h122v-10M418 421v7M496 421v7M368 451h16v6h-16zM530 451h16v6h-16z" />
        <path d="M415 451h85v12h-85z" fill="#ddd" /><path d="M370 466h174v21H370zM410 487h95v21h-95zM436 508h43v24h-43z" fill="#fff" strokeWidth="3" />
        <path d="M452 364h12v88h-12z" fill="#fff" strokeWidth="3.500" />
        <path d="M188 253h119l142 115M188 307h119l125 80M188 373h119l104 29M188 421h117l68-16M188 467h110l78-46" />
      </g>
    </g>
    <Marks items={axleMarks} size={42} drop={15} />
  </Figure>
);

/* ---------- data ---------- */

type Entry = { level: number; title: string; open?: boolean };

const bookmarks: Entry[] = [
  { level: 0, title: "1- Table of contents" },
  { level: 0, title: "2- Technical data", open: true },
  { level: 1, title: "2.1 Tightening torques" },
  { level: 1, title: "2.2 General tightening torques", open: true },
  { level: 2, title: "2.2.1 Galvanised, non-oiled bolts" },
  { level: 2, title: "2.2.2 Untreated, oiled bolts" },
  { level: 0, title: "3- Maintenance, lubrication schedule - P2", open: true },
  { level: 1, title: "3.1 Maintenance schedule", open: true },
  { level: 2, title: "LAE240" },
  { level: 2, title: "SAE200" },
  { level: 2, title: "SAE140S" },
  { level: 1, title: "3.2 Lubrication chart", open: true },
  { level: 2, title: "LAE240" },
  { level: 2, title: "SAE200" },
  { level: 2, title: "SAE140S" },
  { level: 1, title: "3.3 Set up and maintenance instructions - LAE240", open: true },
  { level: 2, title: "3.3.1 Setting up the new truck", open: true },
  { level: 3, title: "Lifting the truck" },
  { level: 2, title: "3.3.2 Start up", open: true },
];

type Column = { head: string; value: string; width?: number };

const leftColumns: Column[] = [
  { head: "T-code", value: "698, 705, 706", width: 154 },
  { head: "Valid from serial number", value: "968383-", width: 163 },
  { head: "Date", value: "2007-03-01", width: 85 },
  { head: "Order number", value: "247375-040" },
];

const rightColumns: Column[] = [
  { head: "Order number", value: "247375-040", width: 105 },
  { head: "Date", value: "2007-03-01", width: 84 },
  { head: "Valid from serial number", value: "968383-", width: 172 },
  { head: "T-code", value: "698, 705, 706" },
];

const PageHeader = ({ columns, right }: { columns: Column[]; right?: boolean }) => (
  <SheetHead $right={right}>
    <SheetTitles $right={right}>
      <SheetTitle>Steering system – 4000</SheetTitle>
      <SheetSub>Included components</SheetSub>
    </SheetTitles>
    <Codes>
      <colgroup>{columns.map((c) => <col key={c.head} width={c.width} />)}</colgroup>
      <thead><tr>{columns.map((c) => <th key={c.head} scope="col">{c.head}</th>)}</tr></thead>
      <tbody><tr>{columns.map((c) => <td key={c.head}>{c.value}</td>)}</tr></tbody>
    </Codes>
  </SheetHead>
);

export default function App() {
  return (
    <Shell>
      <GlobalStyle />
      <Toolbar>
        <Group>
          <Tool name="save" label="Save" />
          <Tool name="star" label="Add to favourites" />
          <Tool name="cloud" label="Upload" />
          <Tool name="print" label="Print" />
          <Tool name="search" label="Find" />
        </Group>
        <Group $start="133px">
          <Tool name="up" label="Previous page" />
          <Tool name="down" label="Next page" />
          <PageInput aria-label="Page number" defaultValue="88" />
          <PageTotal><span>/</span><span>264</span></PageTotal>
          <Separator $left={16} $right={12} />
          <Tool name="cursor" label="Select" />
          <Tool name="hand" label="Pan" />
          <Tool name="minus" label="Zoom out" />
          <Tool name="plus" label="Zoom in" />
          <ZoomBox>
            <ZoomSelect aria-label="Zoom level" defaultValue="53,9%"><option>53,9%</option><option>100%</option></ZoomSelect>
            <ZoomCaret><Caret /></ZoomCaret>
          </ZoomBox>
          <ToolButton type="button" $width={48} aria-label="Page fit">{icons.fit}<Caret /></ToolButton>
          <ToolButton type="button" $width={80} aria-label="Read mode">{icons.keyboard}</ToolButton>
          <Separator $left={1} $right={12} />
          <Tool name="comment" label="Comment" />
          <Tool name="marker" label="Highlight" />
          <Tool name="pen" label="Sign" />
          <Tool name="stamp" label="Edit" />
          <Tool name="trash" label="Delete" />
          <Tool name="rotate" label="Rotate" />
        </Group>
        <Group $start="auto">
          <Tool name="link" label="Share link" />
          <Tool name="mail" label="Send by email" />
          <Tool name="user" label="Invite people" />
        </Group>
      </Toolbar>

      <Main>
        <Rail>
          <RailButton type="button" aria-label="Page thumbnails">
            <Icon size={32}>
              <path d="M9 10H6v19h15v-5" /><path d="M12 3h9.500l7 7V23.500H12zM21 3.500V10.500H28" fill="#fbfbfb" />
            </Icon>
          </RailButton>
          <RailButton type="button" aria-label="Bookmarks">
            <Icon size={32}><path d="M9 4h15v23l-7.500-7L9 27z" stroke="#1a73c8" strokeWidth="2.600" /></Icon>
          </RailButton>
          <RailButton type="button" aria-label="Attachments">
            <Icon size={32}>
              <path d="M18.500 8L10 17.500a2.300 2.300 0 0 0 3.500 3L23.500 9.500c4-5-2-10-6.500-5.500L6 16c-5.500 7 3 14 9 8L27 11.500" strokeWidth="2.300" />
            </Icon>
          </RailButton>
          <Notch>
            <svg width="11" height="20" viewBox="0 0 11 20"><path d="M11 1v18" stroke="#fbfbfb" strokeWidth="2" /><path d="M10.500 0v1L1.500 10l9 9v1" fill="none" stroke={line} /></svg>
          </Notch>
        </Rail>

        <Panel>
          <PanelHead>
            <PanelTitle>Bookmarks</PanelTitle>
            <button type="button" aria-label="Close panel">
              <svg width="16" height="16" viewBox="0 0 16 16" stroke={ink} strokeWidth="2.800"><path d="M1.500 1.500l13 13M14.500 1.500l-13 13" /></svg>
            </button>
          </PanelHead>
          <PanelTools>
            <OptionsButton type="button" aria-label="Bookmark options">
              <svg width="26" height="22" viewBox="0 0 26 22" fill="none" stroke={ink} strokeWidth="2.200">
                <path d="M1.500 1.500h23v19h-23z" /><path d="M12.500 8h7M12.500 14h7" />
                <path d="M5.500 8H10M5.500 14H10" strokeWidth="4.400" />
              </svg>
              <Caret />
            </OptionsButton>
          </PanelTools>
          <PanelBody>
            <Tree>
              {bookmarks.map((b, i) => (
                <TreeRow key={i} $level={b.level}>
                  {b.open ? <Toggle type="button" aria-label={`Collapse ${b.title}`}><Chevron /></Toggle> : <ToggleGap />}
                  <TreeLink href="#"><BookmarkIcon />{b.title}</TreeLink>
                </TreeRow>
              ))}
            </Tree>
            <PanelScroll><PanelThumb /></PanelScroll>
          </PanelBody>
        </Panel>

        <CollapseStrip type="button" $width={22} aria-label="Hide navigation pane"><SideArrow /></CollapseStrip>
        <Gutter />
        <Spread>
          <Sheet>
            <PageHeader columns={leftColumns} />
            <ExplodedView />
            <SheetFoot>
              <FootCell $width={160}>12- 6</FootCell>
              <FootCell $width={87}>Service Manual</FootCell>
              <FootCell $width={130}>LAE240, SAE200, SAE140S</FootCell>
              <FootCell>© BT Europe AB</FootCell>
            </SheetFoot>
          </Sheet>
          <Sheet $right>
            <PageHeader columns={rightColumns} right />
            <SectionTitle>12.1.1 Steering axle</SectionTitle>
            <AxleSections />
            <SheetFoot $right>
              <FootCell $width={160}>© BT Europe AB</FootCell>
              <FootCell $width={87}>Service Manual</FootCell>
              <FootCell $width={130}>LAE240, SAE200, SAE140S</FootCell>
              <FootCell>12- 7</FootCell>
            </SheetFoot>
          </Sheet>
        </Spread>
        <Gutter />
        <DocScroll><DocScrollCap /><DocThumb /></DocScroll>
        <CollapseStrip type="button" $width={21} aria-label="Show tools pane"><SideArrow /></CollapseStrip>
      </Main>
      <Taskbar />
      <Watermark>machinecatalogic.com</Watermark>
    </Shell>
  );
}
